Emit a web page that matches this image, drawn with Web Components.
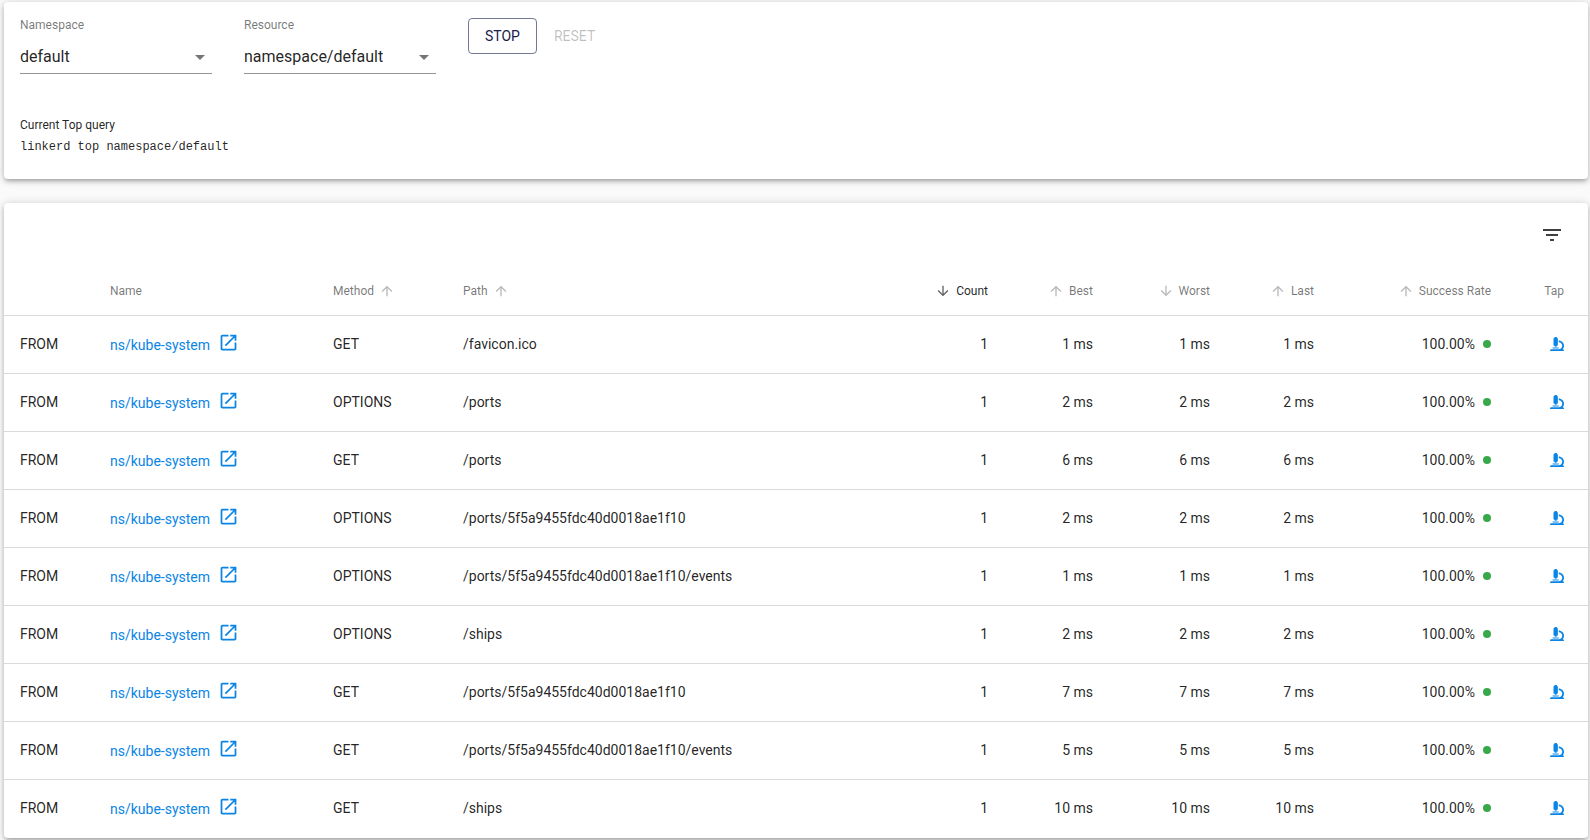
<!DOCTYPE html>
<html lang="en">
<head>
<meta charset="utf-8">
<title>Top</title>
<style>
    body {
        margin: 0;
        padding: 2px 2px 2px 4px;
        background: #fafafa;
        color: rgba(0, 0, 0, 0.87);
        font-family: Roboto, sans-serif;
        font-size: 14px;
    }
</style>
</head>
<body>
<top-page></top-page>

<script>
const icons = {
    up: 'M4 12l1.41 1.41L11 7.83V20h2V7.83l5.58 5.59L20 12l-8-8-8 8z',
    down: 'M20 12l-1.41-1.41L13 16.17V4h-2v12.17l-5.58-5.59L4 12l8 8 8-8z',
    open: 'M19 19H5V5h7V3H5c-1.11 0-2 .9-2 2v14c0 1.1.89 2 2 2h14c1.1 0 2-.9 2-2v-7h-2v7zM14 3v2h3.59l-9.83 9.83 1.41 1.41L19 6.41V10h2V3h-7z',
    filter: 'M10 18h4v-2h-4v2zM3 6v2h18V6H3zm3 7h12v-2H6v2z',
    caret: 'M7 10l5 5 5-5z',
    microscope: 'M160 320h12v16c0 8.84 7.16 16 16 16h40c8.84 0 16-7.16 16-16v-16h12c17.67 0 32-14.33 32-32V64c0-17.67-14.33-32-32-32V16c0-8.84-7.16-16-16-16h-64c-8.84 0-16 7.16-16 16v16c-17.67 0-32 14.33-32 32v224c0 17.67 14.33 32 32 32zm304 128h-1.29C493.24 413.99 512 369.2 512 320c0-105.88-86.12-192-192-192v64c70.58 0 128 57.42 128 128s-57.42 128-128 128H48c-26.51 0-48 21.49-48 48 0 8.84 7.16 16 16 16h480c8.84 0 16-7.16 16-16 0-26.51-21.49-48-48-48zm-360-32h208c4.42 0 8-3.58 8-8v-16c0-4.42-3.58-8-8-8H104c-4.42 0-8 3.58-8 8v16c0 4.42 3.58 8 8 8z'
}

class TopIcon extends HTMLElement {
    constructor() {
        super()
        this.attachShadow({ mode: 'open' })
    }

    connectedCallback() {
        const name = this.getAttribute('name')
        const box = name === 'microscope' ? 512 : 24
        this.shadowRoot.innerHTML = /*html*/`
            <style>
                :host {
                    display: inline-block;
                    flex: none;
                    width: var(--icon-size, 24px);
                    height: var(--icon-size, 24px);
                }

                svg {
                    display: block;
                    width: 100%;
                    height: 100%;
                    fill: currentColor;
                }
            </style>
            <svg viewBox="0 0 ${box} ${box}" aria-hidden="true"><path d="${icons[name]}"/></svg>
        `
    }
}

class TopCard extends HTMLElement {
    constructor() {
        super()
        this.attachShadow({ mode: 'open' })
        this.shadowRoot.innerHTML = /*html*/`
            <style>
                :host {
                    display: block;
                    background: #fff;
                    border-radius: 4px;
                    box-shadow: 0 1px 8px rgba(0, 0, 0, 0.2), 0 3px 4px rgba(0, 0, 0, 0.14), 0 3px 3px -2px rgba(0, 0, 0, 0.12);
                }
            </style>
            <slot></slot>
        `
    }
}

class TopSelect extends HTMLElement {
    constructor() {
        super()
        this.attachShadow({ mode: 'open' })
    }

    connectedCallback() {
        this.shadowRoot.innerHTML = /*html*/`
            <style>
                :host {
                    display: flex;
                    flex-direction: column;
                    width: 192px;
                }

                label {
                    font-size: 12px;
                    line-height: 14px;
                    color: rgba(0, 0, 0, 0.54);
                }

                .field {
                    position: relative;
                    margin-top: 9px;
                    border-bottom: 1px solid rgba(0, 0, 0, 0.42);
                }

                select {
                    display: block;
                    appearance: none;
                    width: 100%;
                    height: 32px;
                    padding: 0 32px 0 0;
                    border: none;
                    background: none;
                    color: inherit;
                    font: 16px/32px Roboto, sans-serif;
                }

                top-icon {
                    position: absolute;
                    top: 4px;
                    right: 0;
                    color: rgba(0, 0, 0, 0.54);
                    pointer-events: none;
                }
            </style>
            <label for="select">${this.getAttribute('label')}</label>
            <div class="field">
                <select id="select"><option>${this.getAttribute('value')}</option></select>
                <top-icon name="caret"></top-icon>
            </div>
        `
    }
}

class TopButton extends HTMLElement {
    constructor() {
        super()
        this.attachShadow({ mode: 'open' })
    }

    connectedCallback() {
        const disabled = this.hasAttribute('disabled') ? 'disabled' : ''
        this.shadowRoot.innerHTML = /*html*/`
            <style>
                :host {
                    display: block;
                }

                button {
                    height: 36px;
                    padding: 0 16px;
                    border: 1px solid rgba(23, 32, 75, 0.6);
                    border-radius: 4px;
                    background: none;
                    color: #17204b;
                    font: 14px Roboto, sans-serif;
                    cursor: pointer;
                }

                button:disabled {
                    border-color: transparent;
                    color: rgba(0, 0, 0, 0.26);
                    cursor: default;
                }
            </style>
            <button type="button" ${disabled}><slot></slot></button>
        `
    }
}

class TopQuery extends HTMLElement {
    constructor() {
        super()
        this.attachShadow({ mode: 'open' })
        this.shadowRoot.innerHTML = /*html*/`
            <style>
                :host {
                    display: block;
                    font-size: 12px;
                    line-height: 20px;
                }

                code {
                    display: block;
                    margin-top: 2px;
                    font: 12px/20px "Liberation Mono", monospace;
                }
            </style>
            <div>Current Top query</div>
            <code><slot></slot></code>
        `
    }
}

class TopTable extends HTMLElement {
    columns = [
        { title: '', width: 90 },
        { title: 'Name', width: 223 },
        { title: 'Method', width: 130, sort: 'up' },
        { title: 'Path', sort: 'up' },
        { title: 'Count', width: 130, sort: 'down', numeric: true, active: true },
        { title: 'Best', width: 105, sort: 'up', numeric: true },
        { title: 'Worst', width: 117, sort: 'down', numeric: true },
        { title: 'Last', width: 104, sort: 'up', numeric: true },
        { title: 'Success Rate', width: 177, sort: 'up', numeric: true },
        { title: 'Tap', width: 81, numeric: true }
    ]

    rows = [
        ['GET', '/favicon.ico', 1],
        ['OPTIONS', '/ports', 2],
        ['GET', '/ports', 6],
        ['OPTIONS', '/ports/5f5a9455fdc40d0018ae1f10', 2],
        ['OPTIONS', '/ports/5f5a9455fdc40d0018ae1f10/events', 1],
        ['OPTIONS', '/ships', 2],
        ['GET', '/ports/5f5a9455fdc40d0018ae1f10', 7],
        ['GET', '/ports/5f5a9455fdc40d0018ae1f10/events', 5],
        ['GET', '/ships', 10]
    ]

    constructor() {
        super()
        this.attachShadow({ mode: 'open' })
        this.render()
    }

    renderHeader({ title, sort, numeric, active }) {
        const classes = [numeric && 'numeric', active && 'active'].filter(Boolean).join(' ')
        const label = sort
            ? `<button type="button">${title}<top-icon name="${sort}"></top-icon></button>`
            : title
        return `<th scope="col" class="${classes}">${label}</th>`
    }

    renderRow([method, path, ms]) {
        return /*html*/`
            <tr>
                <td>FROM</td>
                <td><a class="name" href="#namespace">ns/kube-system<top-icon name="open"></top-icon></a></td>
                <td>${method}</td>
                <td>${path}</td>
                <td class="numeric">1</td>
                <td class="numeric">${ms} ms</td>
                <td class="numeric">${ms} ms</td>
                <td class="numeric">${ms} ms</td>
                <td class="numeric"><span class="rate">100.00%<i class="dot"></i></span></td>
                <td class="numeric"><a class="tap" href="#tap" aria-label="Tap"><top-icon name="microscope"></top-icon></a></td>
            </tr>`
    }

    render() {
        this.shadowRoot.innerHTML = /*html*/`
            <style>
                :host {
                    display: block;
                }

                .toolbar {
                    display: flex;
                    justify-content: flex-end;
                    align-items: center;
                    height: 64px;
                    padding: 0 24px;
                }

                button {
                    padding: 0;
                    border: none;
                    background: none;
                    color: inherit;
                    font: inherit;
                    cursor: pointer;
                }

                .toolbar button {
                    display: flex;
                    color: rgba(0, 0, 0, 0.75);
                }

                table {
                    width: 100%;
                    table-layout: fixed;
                    border-collapse: separate;
                    border-spacing: 0;
                }

                th, td {
                    box-sizing: border-box;
                    height: 58px;
                    padding: 0 16px 2px;
                    border-bottom: 1px solid #dadada;
                    text-align: left;
                    white-space: nowrap;
                }

                th {
                    height: 49px;
                    padding-bottom: 0;
                    font-size: 12px;
                    font-weight: 400;
                    color: rgba(0, 0, 0, 0.54);
                }

                tbody tr:last-child td {
                    border-bottom-color: transparent;
                }

                .numeric {
                    text-align: right;
                }

                th:last-child, td:last-child {
                    padding-right: 24px;
                }

                th button {
                    display: flex;
                    align-items: center;
                    gap: 5px;
                    --icon-size: 16px;
                }

                th top-icon {
                    opacity: 0.5;
                }

                .numeric button {
                    flex-direction: row-reverse;
                    margin-left: auto;
                }

                .active {
                    color: rgba(0, 0, 0, 0.87);
                }

                .active top-icon {
                    opacity: 0.7;
                }

                a {
                    color: #0a85e6;
                    text-decoration: none;
                }

                .name {
                    display: flex;
                    align-items: flex-end;
                    gap: 8px;
                    line-height: 22px;
                    --icon-size: 21px;
                }

                .name top-icon {
                    margin-bottom: 3px;
                }

                .rate {
                    display: flex;
                    justify-content: flex-end;
                    align-items: center;
                    gap: 8px;
                }

                .dot {
                    width: 8px;
                    height: 8px;
                    border-radius: 50%;
                    background: #38a94a;
                }

                .tap {
                    display: flex;
                    justify-content: flex-end;
                    --icon-size: 14px;
                }
            </style>
            <div class="toolbar">
                <button type="button" aria-label="Filter"><top-icon name="filter"></top-icon></button>
            </div>
            <table>
                <colgroup>${this.columns.map(c => `<col${c.width ? ` style="width: ${c.width}px"` : ''}>`).join('')}</colgroup>
                <thead><tr>${this.columns.map(this.renderHeader).join('')}</tr></thead>
                <tbody>${this.rows.map(this.renderRow).join('')}</tbody>
            </table>
        `
    }
}

class TopPage extends HTMLElement {
    constructor() {
        super()
        this.attachShadow({ mode: 'open' })
        this.shadowRoot.innerHTML = /*html*/`
            <style>
                :host {
                    display: flex;
                    flex-direction: column;
                    gap: 24px;
                }

                .form {
                    display: flex;
                    align-items: flex-start;
                    padding: 16px 16px 0;
                }

                .form top-select {
                    margin-right: 32px;
                }

                top-query {
                    padding: 41px 16px 22px;
                }
            </style>
            <top-card>
                <div class="form">
                    <top-select label="Namespace" value="default"></top-select>
                    <top-select label="Resource" value="namespace/default"></top-select>
                    <top-button>STOP</top-button>
                    <top-button disabled>RESET</top-button>
                </div>
                <top-query>linkerd top namespace/default</top-query>
            </top-card>
            <top-card>
                <top-table></top-table>
            </top-card>
        `
    }
}

customElements.define('top-icon', TopIcon)
customElements.define('top-card', TopCard)
customElements.define('top-select', TopSelect)
customElements.define('top-button', TopButton)
customElements.define('top-query', TopQuery)
customElements.define('top-table', TopTable)
customElements.define('top-page', TopPage)
</script>
</body>
</html>
